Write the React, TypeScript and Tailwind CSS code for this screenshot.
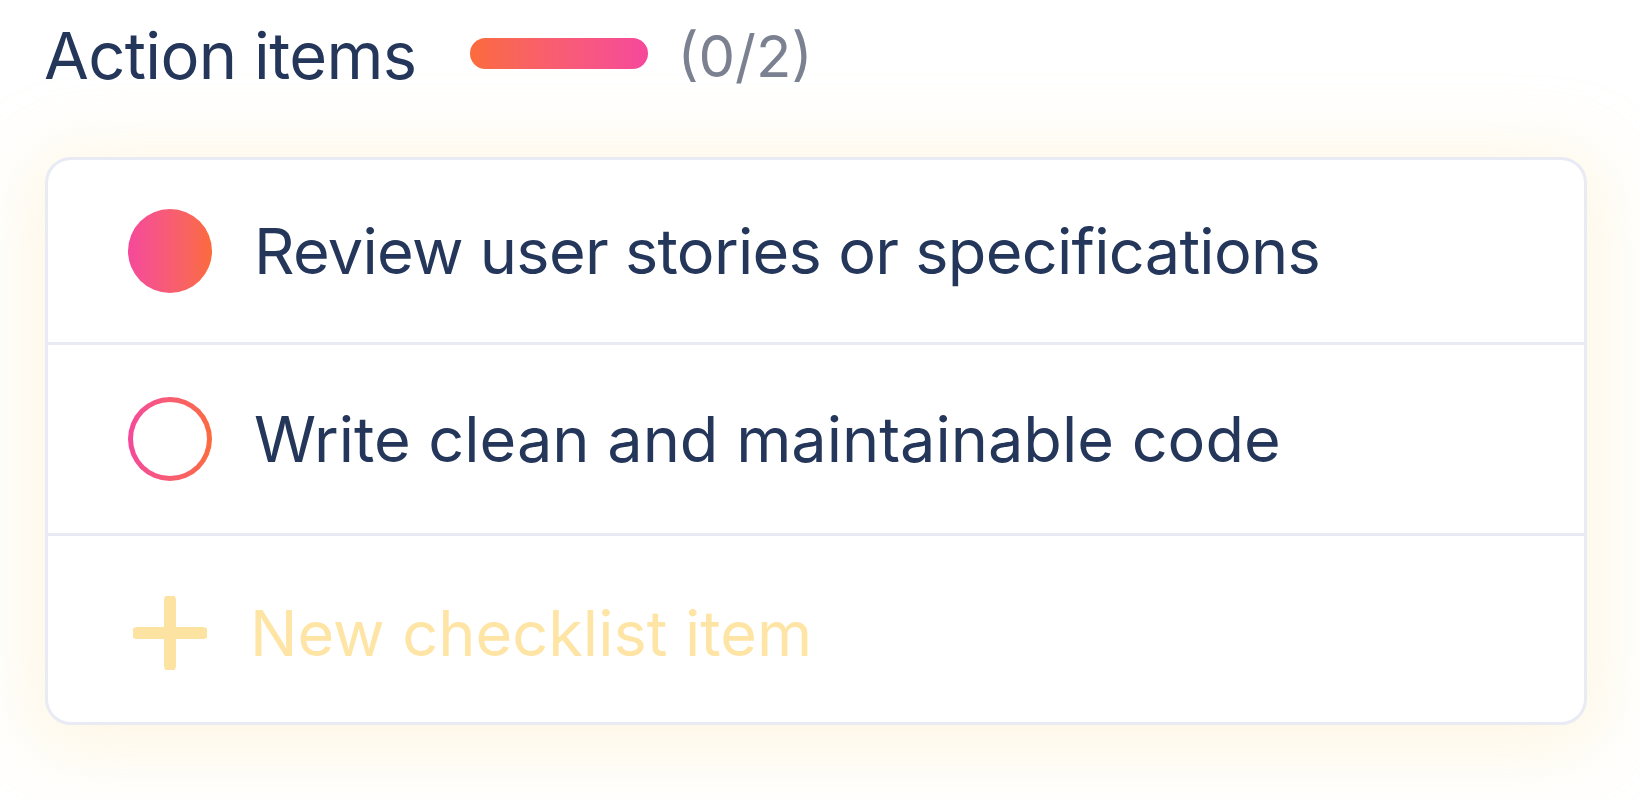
import React from 'react';

const items = [
  { label: 'Review user stories or specifications', done: true, h: 'h-[185px]', w: 'tracking-[-0.011em]' },
  { label: 'Write clean and maintainable code', done: false, h: 'h-[191px]', w: 'tracking-normal' },
];

const App: React.FC = () => {
  return (
    <div
      className="w-[1640px] h-[800px] bg-white overflow-hidden"
      style={{ fontFamily: 'Inter, "Noto Sans", sans-serif' }}
    >
      {/* Header */}
      <div className="flex items-center pl-[44px] pt-[11px] h-[100px]">
        <h2 className="text-[65px] leading-none font-normal text-[#24365a] tracking-[-0.01em]">Action items</h2>
        <div className="ml-[54px] w-[178px] h-[31px] rounded-full bg-gradient-to-r from-[#fb6b3b] to-[#f6489b] -translate-y-[2px]" />
        <span className="ml-[29px] text-[58px] leading-none text-[#7b8191]">(0/2)</span>
      </div>

      {/* Checklist card */}
      <div className="mt-[57px] ml-[45px] w-[1542px] rounded-[26px] border-[3px] border-[#e8eaf4] bg-white shadow-[0_10px_70px_20px_rgba(253,226,160,0.28)]">
        {items.map((item) => (
          <div
            key={item.label}
            className={`flex items-center ${item.h} pl-[80px] border-b-[3px] border-[#e8eaf4]`}
          >
            {item.done ? (
              <div className="w-[84px] h-[84px] rounded-full bg-gradient-to-r from-[#f5489b] to-[#fb6b3b]" />
            ) : (
              <div className="w-[84px] h-[84px] rounded-full bg-gradient-to-r from-[#f5489b] to-[#fb6b3b] p-[5px]">
                <div className="w-full h-full rounded-full bg-white" />
              </div>
            )}
            <span className={`ml-[42px] text-[63px] leading-none text-[#24365a] ${item.w}`}>{item.label}</span>
          </div>
        ))}
        <div className="flex items-center h-[186px] pl-[85px] pt-[8px]">
          <svg width="74" height="74" viewBox="0 0 74 74" fill="none">
            <path d="M37 4v66M4 37h66" stroke="#fde3a1" strokeWidth="12" strokeLinecap="round" />
          </svg>
          <span className="ml-[43px] text-[63px] leading-none text-[#fee5a5]">New checklist item</span>
        </div>
      </div>
    </div>
  );
};

export default App;
